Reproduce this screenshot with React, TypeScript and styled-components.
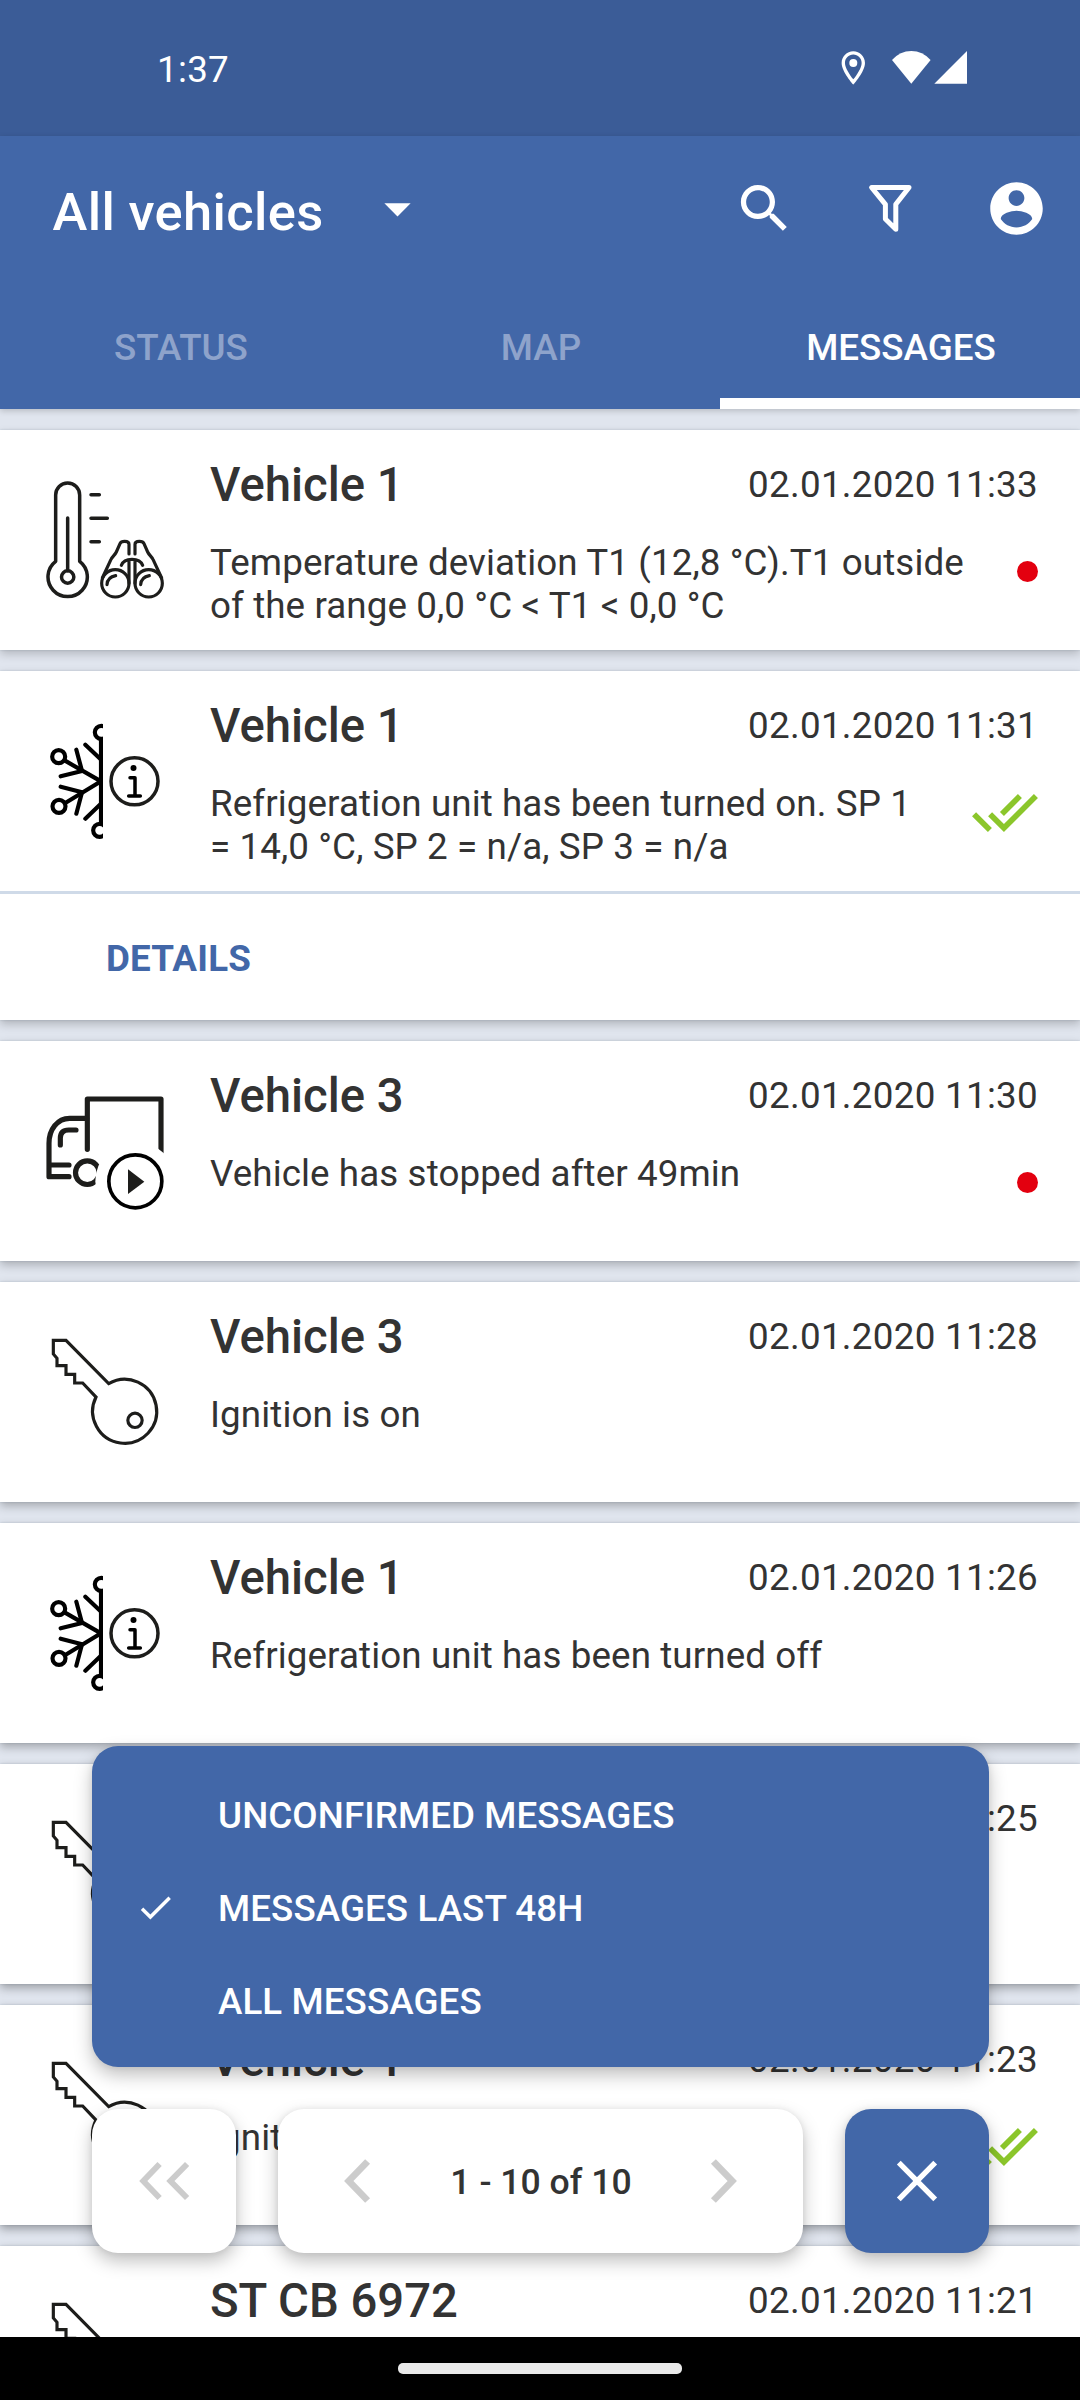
import React from "react";
import styled, { createGlobalStyle } from "styled-components";

const BLUE = "#4267a8";
const INK = "#1d1d1b";

const GlobalStyle = createGlobalStyle`
  * { box-sizing: border-box; }
  body { margin: 0; background: #000; }
  button { border: 0; padding: 0; background: none; font: inherit; color: inherit; letter-spacing: inherit; }
  svg { display: block; flex: none; }
`;

const Screen = styled.div`
  position: relative;
  display: flex;
  flex-direction: column;
  width: 1080px;
  height: 2400px;
  overflow: hidden;
  background: #e0e5ee;
  color: #333;
  font-family: Roboto, "Liberation Sans", sans-serif;
  font-size: 36.75px;
  line-height: 43px;
`;

const StatusBar = styled.div`
  display: flex;
  flex: none;
  align-items: center;
  justify-content: space-between;
  height: 136px;
  padding: 0 113px 0 157px;
  background: #3b5c97;
  color: #fff;
`;

const Clock = styled.span`
  padding-top: 3px;
  letter-spacing: 0.3px;
`;

const StatusIcons = styled.div`
  display: flex;
  align-items: center;
`;

const Header = styled.header`
  position: relative;
  z-index: 1;
  flex: none;
  background: ${BLUE};
  color: #fff;
  box-shadow: 0 2px 6px rgba(0, 0, 0, 0.18);
`;

const Toolbar = styled.div`
  display: flex;
  align-items: center;
  height: 147px;
  padding: 0 32px 2px 52.5px;
`;

const VehiclePicker = styled.button`
  display: flex;
  align-items: center;
  width: 376px;
  justify-content: space-between;
`;

const PickerLabel = styled.span`
  padding-top: 6px;
  font-size: 52.5px;
  font-weight: 500;
  letter-spacing: 0.35px;
  line-height: 62px;
`;

const Actions = styled.div`
  display: flex;
  gap: 63px;
  margin-left: auto;
`;

const Tabs = styled.nav`
  display: grid;
  grid-template-columns: repeat(3, 1fr);
  height: 126px;
`;

const Tab = styled.button<{ $active?: boolean }>`
  padding: ${(p) => (p.$active ? 11 : 0)}px 0 0 2px;
  border-bottom: ${(p) => (p.$active ? "11px solid #fff" : "0")};
  color: ${(p) => (p.$active ? "#fff" : "#8ea3cb")};
  font-weight: 500;
`;

const TabLabel = styled.span`
  display: block;
  padding-top: 3px;
`;

const List = styled.main`
  display: flex;
  flex: 1;
  flex-direction: column;
  gap: 21px;
  min-height: 0;
  padding-top: 21px;
  overflow: hidden;
`;

const Card = styled.article<{ $depth: number }>`
  flex: none;
  background: #fff;
  box-shadow:
    0 0 2px rgba(70, 90, 120, 0.22),
    0 4px 9px rgba(0, 0, 0, ${(p) => p.$depth});
`;

const CardBody = styled.div`
  display: flex;
  height: 220px;
  padding: 0 42px 0 30px;
`;

const CardIcon = styled.div`
  flex: none;
  width: 150px;
  margin: 30px 30px 0 0;
`;

const CardText = styled.div`
  flex: 1;
  padding-top: 28px;
`;

const CardHead = styled.div`
  display: flex;
  justify-content: space-between;
  height: 83px;
`;

const VehicleName = styled.h2`
  margin: 0;
  font-size: 47.25px;
  font-weight: 500;
  line-height: 55px;
`;

const Stamp = styled.time`
  padding-top: 5px;
  letter-spacing: 0.29px;
`;

const MessageRow = styled.div`
  display: flex;
  justify-content: space-between;
  gap: 42px;
`;

const Message = styled.p`
  margin: 0;
  letter-spacing: 0.1px;
`;

const UnreadDot = styled.span`
  flex: none;
  width: 21px;
  height: 21px;
  margin-top: 20px;
  border-radius: 50%;
  background: #e3000f;
`;

const Confirmed = styled.span`
  flex: none;
  margin-top: 12px;
`;

const CardFooter = styled.div`
  display: flex;
  align-items: center;
  height: 129px;
  padding: 2px 0 0 106px;
  border-top: 3px solid #cfdae8;
`;

const DetailsButton = styled.button`
  color: ${BLUE};
  font-weight: 700;
  letter-spacing: 0.2px;
`;

const NavBar = styled.footer`
  position: relative;
  z-index: 3;
  display: flex;
  flex: none;
  justify-content: center;
  height: 63px;
  padding-top: 26px;
  background: #000;
`;

const HomeHandle = styled.span`
  width: 284px;
  height: 11px;
  border-radius: 5px;
  background: #eaeaea;
`;

const Floating = styled.section`
  position: absolute;
  z-index: 2;
  top: 1746px;
  left: 92px;
  display: flex;
  flex-direction: column;
  gap: 42px;
  width: 897px;
`;

const floatShadow = "0 8px 18px rgba(0,0,0,0.25), 0 0 6px rgba(0,0,0,0.07)";

const FilterMenu = styled.ul`
  height: 321px;
  margin: 0;
  padding: 23px 0 0;
  border-radius: 26px;
  background: ${BLUE};
  box-shadow: ${floatShadow};
  color: #fff;
  list-style: none;
`;

const FilterItem = styled.li`
  display: flex;
  align-items: center;
  height: 93px;
  font-weight: 500;
  letter-spacing: 0.08px;
`;

const CheckSlot = styled.span`
  width: 126px;
  padding: 0 0 3px 43px;
`;

const Pager = styled.div`
  display: flex;
  gap: 42px;
  height: 144px;
`;

const PagerBox = styled.div<{ $tone?: string; $wide?: boolean }>`
  display: flex;
  flex: ${(p) => (p.$wide ? "1" : "0 0 144px")};
  align-items: center;
  justify-content: ${(p) => (p.$wide ? "space-between" : "center")};
  padding: ${(p) => (p.$wide ? "0 66px" : "0")};
  border-radius: 26px;
  background: ${(p) => p.$tone ?? "#fff"};
  box-shadow: ${floatShadow};
`;

const PageRange = styled.span`
  padding: 3px 0 0 1px;
  font-size: 35.6px;
  font-weight: 500;
`;

const Glyph = ({ d, size = 63 }: { d: string; size?: number }) => (
  <svg width={size} height={size} viewBox="0 0 24 24" fill="currentColor">
    <path d={d} />
  </svg>
);

const Filter = () => (
  <svg width="63" height="63" viewBox="859 177 63 63" fill="none" stroke="currentColor" strokeWidth="5" strokeLinejoin="round">
    <path d="M871.6 187.5H909L895.8 204.3V229.3L885.4 219V204.3Z" />
  </svg>
);

const Thermometer = () => (
  <svg width="150" height="150" viewBox="0 0 450 450" fill="none" stroke={INK} strokeWidth="10.5" strokeLinecap="round" strokeLinejoin="round">
    <path d="M77 304V105A36 36 0 0 1 149 105V304A59 59 0 1 1 77 304Z" />
    <circle cx="113" cy="351" r="18.5" />
    <path d="M113 174V332M183 104H208M183 175H232M183 245H208" />
    <g strokeWidth="9.5">
      <circle cx="256" cy="370" r="41" />
      <circle cx="356" cy="370" r="41" />
      <path d="M217 354L243 298C246 291 255 285 259 276L270 251Q273 244 284 244Q297 244 297 253V282" />
      <path d="M395 354L369 298C366 291 357 285 353 276L342 251Q339 244 328 244Q315 244 315 253V282" />
      <path d="M274 316C279 303 290 298 306 298C322 298 333 303 338 316M297 300V370M315 300V370" />
      <path d="M231 374C232 359 240 350 257 347M332 374C333 359 341 350 358 347" />
    </g>
  </svg>
);

const Cooling = () => (
  <svg width="150" height="150" viewBox="0 0 450 450" fill="none" stroke="#000" strokeWidth="12.5" strokeLinecap="round">
    <clipPath id="half-flake">
      <rect x="0" y="0" width="219" height="450" />
    </clipPath>
    <g clipPath="url(#half-flake)">
      <path d="M213 114V366" />
      <circle cx="214" cy="94" r="19.5" />
      <circle cx="209" cy="388" r="19.5" />
      <circle cx="86" cy="167" r="19.5" />
      <circle cx="87" cy="316" r="19.5" />
      <path d="M105 179L213 241L107 305" />
      <path d="M139 146L156 210L92 226M166 131L212 175" />
      <path d="M139 338L156 274L92 257M166 353L212 309" />
    </g>
    <circle cx="313.5" cy="241" r="70.5" stroke={INK} strokeWidth="10.5" />
    <path d="M300 230H315V285M296 285H331" strokeWidth="10.5" strokeLinejoin="round" />
    <circle cx="310.5" cy="201" r="9" fill="#000" stroke="none" />
  </svg>
);

const Truck = () => (
  <svg width="150" height="150" viewBox="0 0 450 450" fill="none" stroke={INK} strokeWidth="15.5" strokeLinecap="round" strokeLinejoin="round">
    <path d="M172 235V84H393V260" />
    <path d="M170 142H119C82 142 57 176 57 217V317H117M57 282H117" />
    <path d="M138 177H116Q91 177 91 202V222" />
    <circle cx="172" cy="305" r="35.5" />
    <circle cx="316" cy="331" r="120" fill="#fff" stroke="none" />
    <circle cx="316" cy="331" r="79.5" stroke="#000" strokeWidth="11" />
    <path d="M294 295L343 332L294 369Z" fill={INK} stroke="none" />
  </svg>
);

const Key = () => (
  <svg width="150" height="150" viewBox="0 0 450 450" fill="none" stroke={INK} strokeWidth="9.5">
    <path d="M70 85H108L236 214.8A96 96 0 1 1 198.1 255.1L158 213H134V187H108V161H81V139L70 126Z" />
    <circle cx="315" cy="325" r="21.5" />
  </svg>
);

const DoneAll = () => (
  <svg width="66" height="38" viewBox="0.41 5.59 23.25 13.41" fill="#8bc62b">
    <path d="M18 7l-1.41-1.41-6.34 6.34 1.41 1.41L18 7zm4.24-1.41L11.66 16.17 7.48 12l-1.41 1.41L11.66 19l12-12-1.42-1.41zM.41 13.41L6 19l1.41-1.41L1.83 12 .41 13.41z" />
  </svg>
);

type IconName = "thermometer" | "cooling" | "truck" | "key";

const icons: Record<IconName, () => React.JSX.Element> = {
  thermometer: Thermometer,
  cooling: Cooling,
  truck: Truck,
  key: Key,
};

interface Entry {
  icon: IconName;
  vehicle?: string;
  time: string;
  text?: string;
  state?: "unread" | "confirmed";
  details?: boolean;
}

const entries: Entry[] = [
  { icon: "thermometer", vehicle: "Vehicle 1", time: "02.01.2020 11:33", text: "Temperature deviation T1 (12,8 °C).T1 outside of the range 0,0 °C < T1 < 0,0 °C", state: "unread" },
  { icon: "cooling", vehicle: "Vehicle 1", time: "02.01.2020 11:31", text: "Refrigeration unit has been turned on. SP 1 = 14,0 °C, SP 2 = n/a, SP 3 = n/a", state: "confirmed", details: true },
  { icon: "truck", vehicle: "Vehicle 3", time: "02.01.2020 11:30", text: "Vehicle has stopped after 49min", state: "unread" },
  { icon: "key", vehicle: "Vehicle 3", time: "02.01.2020 11:28", text: "Ignition is on" },
  { icon: "cooling", vehicle: "Vehicle 1", time: "02.01.2020 11:26", text: "Refrigeration unit has been turned off" },
  { icon: "key", time: "02.01.2020 11:25" },
  { icon: "key", vehicle: "Vehicle 1", time: "02.01.2020 11:23", text: "Ignition", state: "confirmed" },
  { icon: "key", vehicle: "ST CB 6972", time: "02.01.2020 11:21" },
];

const MessageCard = ({ entry, index }: { entry: Entry; index: number }) => {
  const Icon = icons[entry.icon];
  return (
    <Card $depth={0.2 + index * 0.02}>
      <CardBody>
        <CardIcon>
          <Icon />
        </CardIcon>
        <CardText>
          <CardHead>
            <VehicleName>{entry.vehicle}</VehicleName>
            <Stamp>{entry.time}</Stamp>
          </CardHead>
          <MessageRow>
            <Message>{entry.text}</Message>
            {entry.state === "unread" && <UnreadDot />}
            {entry.state === "confirmed" && (
              <Confirmed>
                <DoneAll />
              </Confirmed>
            )}
          </MessageRow>
        </CardText>
      </CardBody>
      {entry.details && (
        <CardFooter>
          <DetailsButton>DETAILS</DetailsButton>
        </CardFooter>
      )}
    </Card>
  );
};

export default function App() {
  return (
    <Screen>
      <GlobalStyle />
      <StatusBar>
        <Clock>1:37</Clock>
        <StatusIcons>
          <svg width="126" height="34" viewBox="841 51 126 34" fill="#fff">
            <g transform="translate(833.3 47.9) scale(1.667)">
              <path d="M12 2C8.13 2 5 5.13 5 9c0 5.25 7 13 7 13s7-7.75 7-13c0-3.87-3.13-7-7-7zM7 9c0-2.76 2.24-5 5-5s5 2.24 5 5c0 2.88-2.88 7.19-5 9.88C9.92 16.21 7 11.85 7 9z" />
              <circle cx="12" cy="9" r="2.4" />
            </g>
            <path d="M892 60Q900 51 911.3 51T930.6 60L911.3 83.7Z" />
            <path d="M934.3 83.8L967 51V83.8Z" />
          </svg>
        </StatusIcons>
      </StatusBar>
      <Header>
        <Toolbar>
          <VehiclePicker>
            <PickerLabel>All vehicles</PickerLabel>
            <Glyph d="M7 10l5 5 5-5z" />
          </VehiclePicker>
          <Actions>
            <Glyph d="M15.5 14h-.79l-.28-.27C15.41 12.59 16 11.11 16 9.5 16 5.91 13.09 3 9.5 3S3 5.91 3 9.5 5.91 16 9.5 16c1.61 0 3.09-.59 4.23-1.57l.27.28v.79l5 4.99L20.49 19l-4.99-5zm-6 0C7.01 14 5 11.99 5 9.5S7.01 5 9.5 5 14 7.01 14 9.5 11.99 14 9.5 14z" />
            <Filter />
            <Glyph d="M12 2C6.48 2 2 6.48 2 12s4.48 10 10 10 10-4.48 10-10S17.52 2 12 2zm0 3c1.66 0 3 1.34 3 3s-1.34 3-3 3-3-1.34-3-3 1.34-3 3-3zm0 14.2c-2.5 0-4.71-1.28-6-3.22.03-1.99 4-3.08 6-3.08 1.99 0 5.97 1.09 6 3.08-1.29 1.94-3.5 3.22-6 3.22z" />
          </Actions>
        </Toolbar>
        <Tabs>
          <Tab><TabLabel>STATUS</TabLabel></Tab>
          <Tab><TabLabel>MAP</TabLabel></Tab>
          <Tab $active><TabLabel>MESSAGES</TabLabel></Tab>
        </Tabs>
      </Header>
      <List>
        {entries.map((entry, index) => (
          <MessageCard key={entry.time} entry={entry} index={index} />
        ))}
      </List>
      <Floating>
        <FilterMenu>
          <FilterItem><CheckSlot />UNCONFIRMED MESSAGES</FilterItem>
          <FilterItem>
            <CheckSlot>
              <Glyph size={41} d="M9 16.17L4.83 12l-1.42 1.41L9 19 21 7l-1.41-1.41z" />
            </CheckSlot>
            MESSAGES LAST 48H
          </FilterItem>
          <FilterItem><CheckSlot />ALL MESSAGES</FilterItem>
        </FilterMenu>
        <Pager>
          <PagerBox>
            <svg width="52" height="40" viewBox="138 2161 52 40" fill="none" stroke="#ccc" strokeWidth="5.9">
              <path d="M159.6 2164L143.3 2181L159.6 2198M187.1 2164L170.4 2181L187.1 2198" />
            </svg>
          </PagerBox>
          <PagerBox $wide>
            <svg width="27" height="46" viewBox="344 2158 27 46" fill="none" stroke="#ccc" strokeWidth="6.8">
              <path d="M367.6 2161.5L348.8 2181L367.6 2200.5" />
            </svg>
            <PageRange>1 - 10 of 10</PageRange>
            <svg width="27" height="46" viewBox="710 2158 27 46" fill="none" stroke="#ccc" strokeWidth="6.8">
              <path d="M713.4 2161.5L732.2 2181L713.4 2200.5" />
            </svg>
          </PagerBox>
          <PagerBox $tone={BLUE}>
            <svg width="42" height="42" viewBox="0 0 42 42" fill="none" stroke="#fff" strokeWidth="5.4">
              <path d="M2.8 2.6L39.2 39.4M39.2 2.6L2.8 39.4" />
            </svg>
          </PagerBox>
        </Pager>
      </Floating>
      <NavBar>
        <HomeHandle />
      </NavBar>
    </Screen>
  );
}
